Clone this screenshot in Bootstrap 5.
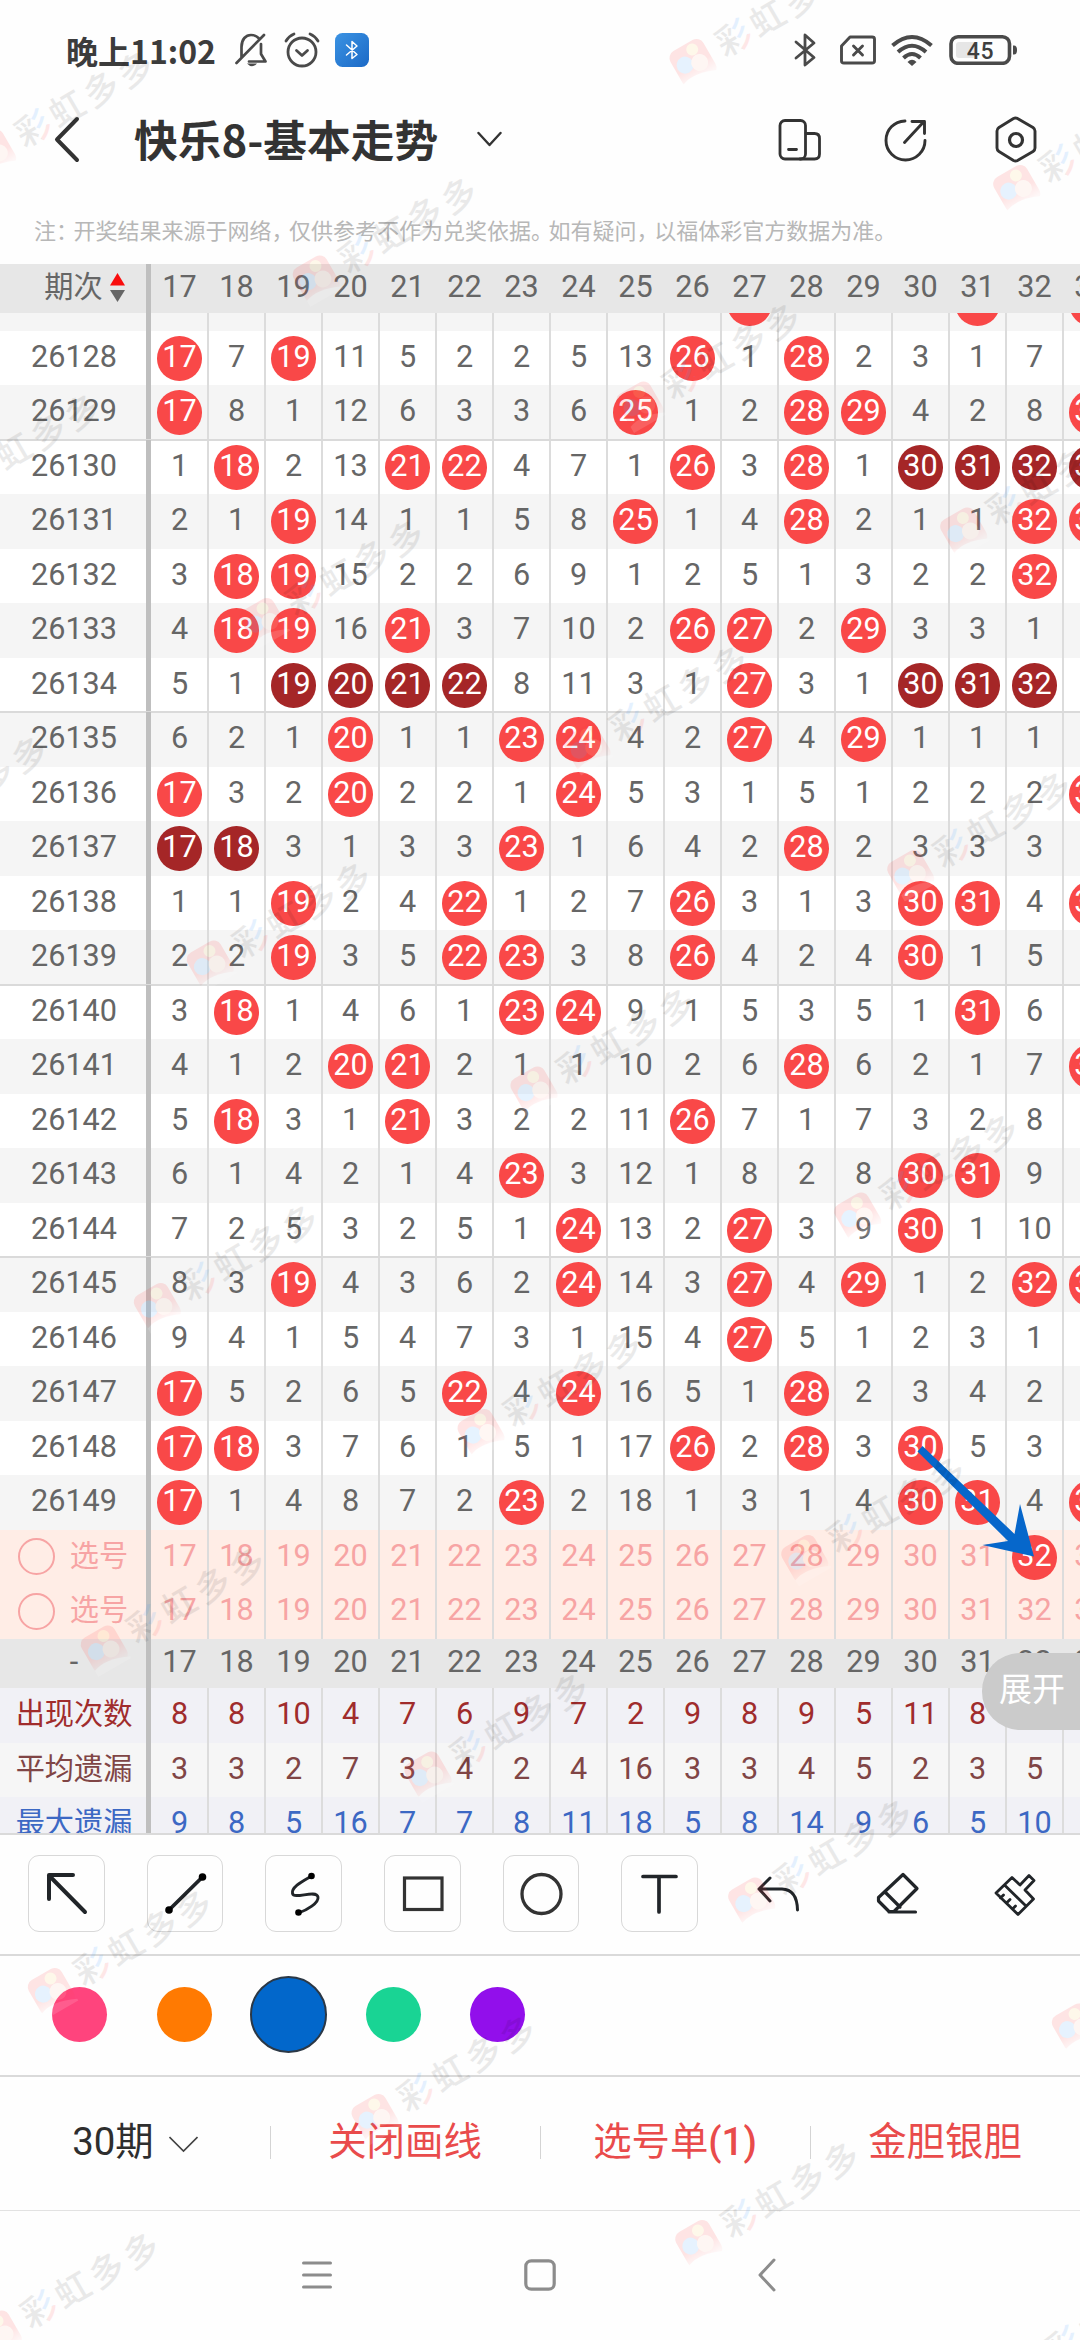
<!DOCTYPE html>
<html lang="zh-CN">
<head>
<meta charset="utf-8">
<meta name="viewport" content="width=device-width, initial-scale=1">
<title>快乐8-基本走势</title>
<link rel="stylesheet" href="https://cdn.jsdelivr.net/npm/bootstrap@5.3.0/dist/css/bootstrap.min.css">
<style>
  body { font-family: Roboto, "Noto Sans CJK SC", sans-serif; background: #fefefe; color: #333; line-height: 1; }
  .screen { width: 1080px; height: 2340px; }
  svg { display: block; flex: none; }
  .ln { fill: none; stroke: currentColor; stroke-linecap: round; stroke-linejoin: round; }

  .statusbar { height: 99px; padding-left: 66px; color: #4a4a4a; }
  .clock { width: 169px; font-size: 32px; font-weight: 600; color: #3c3c3c; font-family: "Noto Sans CJK SC", sans-serif; }
  .titlebar { height: 82px; padding-left: 54px; }
  .title { font-size: 43.7px; font-weight: 600; margin-left: 54px; width: 343px; padding-bottom: 3px; font-family: "Noto Sans CJK SC", sans-serif; }
  .hint { height: 83px; padding: 19px 0 0 34px; font-size: 22px; color: #b7b7b7; }
  .hint i { font-style: normal; letter-spacing: -4.5px; }

  .chart { height: 1569px; }
  .head { height: 49.3px; background: #e7e7e7; flex: none; }
  .line { height: 54.5px; background: #fff; position: relative; flex: none; }
  .line.alt { background: #f5f5f5; }
  .line.split::before { content: ""; position: absolute; left: 0; right: 0; top: -1px; height: 2px; background: #dadada; }
  .line.pick { background: #ffede6; color: #f7a4a4; }
  .line.s1 { background: #f1f1f6; color: #a02c2c; }
  .line.s2 { background: #f6f6f6; color: #804545; }
  .line.s3 { background: #f1f1f6; color: #3c68c4; }
  .peek { height: 17.7px; overflow: hidden; }
  .peek .line { margin-top: -36.8px; }
  .head, .line { font-size: 30.6px; line-height: 36px; color: #666; }
  .tag { width: 152px; flex: none; height: 100%; padding: 0 4px 3px 0; position: relative; }
  .tag::after { content: ""; position: absolute; left: 146px; width: 5px; top: 0; bottom: 0; background: #bfbfbf; }
  .tag .zh { font-size: 29.2px; }
  .tag .period { margin-left: 21px; }
  .cell { width: 57px; flex: none; height: 100%; border-right: 2px solid #dcdcdc; }
  .head .cell { border-color: transparent; }
  .cell span { padding-bottom: 3px; position: relative; }
  .ball { width: 44.6px; height: 44.6px; border-radius: 50%; background: #f94848; color: #fff; margin: 0 -2px; flex: none; }
  .ball.deep { background: #a52627; }
  .ring { width: 37px; height: 37px; border: 2px solid #f7a4a4; border-radius: 50%; margin: 2px 15px 0 -2px; }
  .expand { right: 0; top: 1388.7px; width: 98px; height: 77.3px; border-radius: 38px 0 0 38px; background: #cbcbcb; color: #fff; font-size: 33px; padding: 0 0 3px 17px; }
  .drawn { left: 900px; top: 1160px; }

  .tools { height: 121.3px; border-top: 2px solid #dadada; padding: 0 26px 3px 28px; }
  .tool { width: 76.6px; height: 77px; border: 1px solid transparent; border-radius: 11px; padding: 0; }
  .tool.boxed { border-color: #d8d8d8; }
  .swatches { height: 121px; border-top: 2px solid #dadada; padding: 0 0 3px 52px; gap: 49.5px; }
  .dot { width: 55px; height: 55px; border-radius: 50%; }
  .dot.on { width: 77px; height: 77px; border: 2px solid #2b3846; margin: 0 -11px; }
  .actions { height: 135.7px; border-top: 2px solid #dadada; border-bottom: 1px solid #e2e2e2; font-size: 38.4px; color: #e94b4b; }
  .act { height: 100%; padding-bottom: 2px; }
  .act + .act::before { content: ""; position: absolute; left: 0; top: 49px; width: 1px; height: 33px; background: #d4d4d4; }
  .act b { font-weight: 500; }
  .sysnav { height: 129px; color: #8c8c8c; }
  .marks { left: 0; top: 0; pointer-events: none; z-index: 5; }
  .marks text { font-family: "Noto Sans CJK SC", sans-serif; font-weight: 500; font-size: 35px; }
</style>
<script src="https://cdn.jsdelivr.net/npm/bootstrap@5.3.0/dist/js/bootstrap.bundle.min.js"></script>
</head>
<body>
<main class="screen position-relative overflow-hidden d-flex flex-column">

  <header class="statusbar d-flex align-items-center flex-shrink-0">
    <div class="clock text-nowrap">晚上11:02</div>
    <svg width="32" height="34" viewBox="0 0 32 34"><g class="ln" stroke-width="2.7"><path d="M1.5 30L29 2M6.5 24V14C6.500 6 11 2 16 2C19 2 21.500 3 23.500 5M26 11V21L30.500 28.500H14"/></g><path d="M12 30.500H22Q17 36 12 30.500" fill="currentColor"/></svg>
    <svg width="36" height="36" viewBox="0 0 36 36" style="margin-left:17px"><g class="ln" stroke-width="2.8"><circle cx="18" cy="20" r="14"/><path d="M12.500 18.500L18 23.500L23.500 18.500M2 9Q5 4 10 2M26 2Q31 4 34 9"/></g></svg>
    <svg width="34" height="34" viewBox="0 0 34 34" style="margin-left:15px"><defs><linearGradient id="bt" x2="1" y2="1"><stop stop-color="#3b93e3"/><stop offset="1" stop-color="#1b69c6"/></linearGradient></defs><rect width="34" height="34" rx="7.500" fill="url(#bt)"/><path d="M11.500 12L22 21.500L17 25.500V8.500L22 13L11.500 22" class="ln" stroke-width="1.500" style="stroke:#fff"/></svg>
    <svg width="24" height="36" viewBox="0 0 24 36" style="margin-left:424px"><path class="ln" stroke-width="2.800" d="M3 10L21 25.500L12 33V3L21 11L3 26"/></svg>
    <svg width="36" height="30" viewBox="0 0 36 30" style="margin-left:23px"><path class="ln" stroke-width="2.900" d="M10 2H32Q34.500 2 34.500 4V26Q34.500 28 32 28H4Q1.500 28 1.500 26V11ZM13.500 11L22.500 20M22.500 11L13.500 20"/></svg>
    <svg width="42" height="32" viewBox="0 0 42 32" style="margin-left:15px"><g fill="none" stroke="currentColor" stroke-width="4"><path d="M1.500 11.500Q21-5.500 40.500 11.500"/><path d="M7 18Q21 5.500 35 18"/><path d="M12.500 24Q21 16 29.500 24"/></g><path d="M16.500 28Q21 23.500 25.500 28L21 32Z" fill="currentColor"/></svg>
    <svg width="70" height="30" viewBox="0 0 70 30" style="margin-left:16px"><rect x="2" y="1.800" width="58.500" height="26.500" rx="7" fill="none" stroke="currentColor" stroke-width="3.600"/><rect x="7" y="7" width="20" height="16" rx="3" fill="#e6e6e6"/><path d="M64 10.500H65Q68 10.500 68 15T65 19.500H64Z" fill="currentColor"/><text x="31.500" y="23.500" text-anchor="middle" font-size="23" font-weight="500" letter-spacing=".8" fill="#3f3f3f">45</text></svg>
  </header>

  <nav class="titlebar d-flex align-items-center flex-shrink-0">
    <svg width="26" height="48" viewBox="0 0 26 48"><path class="ln" stroke-width="4" d="M23 3L3 23.500L23 44"/></svg>
    <div class="title text-nowrap">快乐8-基本走势</div>
    <svg width="25" height="20" viewBox="0 0 25 20"><path class="ln" stroke-width="2.400" d="M1.500 3L12.500 15L23.500 3"/></svg>
    <svg width="44" height="44" viewBox="0 0 44 44" style="margin-left:276px"><g class="ln" stroke-width="2.800"><rect x="2" y="2.500" width="25.500" height="38.500" rx="5"/><path d="M28 15.500H36.500Q41.500 15.500 41.500 20.500V36Q41.500 41 36.500 41H22M10.500 31.500H18.500"/></g></svg>
    <svg width="44" height="46" viewBox="0 0 44 46" style="margin-left:62px"><path class="ln" stroke-width="2.900" d="M21 4C10 4.500 2 12.500 2 23.500A19.500 19.500 0 0 0 41 23.500M20.500 25.500L39.500 5M28 4.500H40.500V16.500"/></svg>
    <svg width="42" height="48" viewBox="0 0 42 48" style="margin-left:67px"><path class="ln" stroke-width="2.900" d="M18.500 2.500Q20.500 1.500 22.500 2.500L38 11.500Q40 13 40 15V32Q40 34 38 35.500L22.500 44.500Q20.500 45.500 18.500 44.500L4 35.500Q2 34 2 32V15Q2 13 4 11.500Z"/><circle class="ln" stroke-width="3.200" cx="21" cy="24" r="6.500"/></svg>
  </nav>

  <div class="hint flex-shrink-0 d-flex align-items-center text-nowrap"><div>注<i>：</i>开奖结果来源于网络<i>，</i>仅供参考不作为兑奖依据<i>。</i>如有疑问<i>，</i>以福体彩官方数据为准。</div></div>

  <section class="chart position-relative overflow-hidden flex-shrink-0">
    <div id="grid" class="d-flex flex-column"></div>
    <svg class="drawn position-absolute" width="160" height="160" viewBox="900 1424 160 160"><path fill="#0667cb" d="M922.500 1446L917.500 1451.500L1008 1541L982.500 1545L1034 1556.500L1020 1504L1014.500 1534Z"/></svg>
    <div class="expand position-absolute d-flex align-items-center">展开</div>
  </section>

  <section class="tools d-flex align-items-center justify-content-between flex-shrink-0">
    <button class="btn tool boxed"><svg width="75" height="75" viewBox="0 0 75 75"><path class="ln" stroke-width="4" d="M56 56L20 19.500M44 19H20V43"/></svg></button>
    <button class="btn tool boxed"><svg width="75" height="75" viewBox="0 0 75 75"><path class="ln" stroke-width="3.800" d="M21 54L54.500 21"/><circle cx="21" cy="54" r="3.800"/><circle cx="54.500" cy="21" r="3.800"/></svg></button>
    <button class="btn tool boxed"><svg width="75" height="75" viewBox="0 0 75 75"><path class="ln" stroke-width="2.900" d="M45.500 20C37 25 25 31 26.500 37.500C28 44 50 33 52 41C53 47 41 54 32.500 57"/><circle cx="45.500" cy="20" r="3.300"/><circle cx="32.500" cy="56.500" r="3.300"/></svg></button>
    <button class="btn tool boxed"><svg width="75" height="75" viewBox="0 0 75 75"><rect x="19.500" y="22" width="37.500" height="31.500" fill="none" stroke="#333" stroke-width="3.200"/></svg></button>
    <button class="btn tool boxed"><svg width="75" height="75" viewBox="0 0 75 75"><circle cx="37.500" cy="38" r="19.500" fill="none" stroke="#333" stroke-width="3.300"/></svg></button>
    <button class="btn tool boxed"><svg width="75" height="75" viewBox="0 0 75 75"><path class="ln" stroke-width="3.700" d="M21 20.500H54M37 20.500V56"/></svg></button>
    <button class="btn tool"><svg width="75" height="75" viewBox="0 0 75 75"><path class="ln" stroke-width="3" d="M29 22L18 33L29 45M18 33H41Q56 33.500 56.500 54"/></svg></button>
    <button class="btn tool"><svg width="75" height="75" viewBox="0 0 75 75"><path class="ln" stroke-width="3.200" d="M43 18.500L57 32.500L34 55.500H29L18.500 45V41.500ZM25 36L40 51M29 56H55.500"/></svg></button>
    <button class="btn tool"><svg width="75" height="75" viewBox="0 0 75 75"><path class="ln" stroke-width="2.800" d="M18 37L34 21.500L42 29L51 19.500L56 24.500L47 34L55.500 43L40 58.500ZM27 29.500L47.500 49.500M22.500 42L25.500 39M28.500 47L32 43.500M34.500 53L37.500 50"/></svg></button>
  </section>

  <section class="swatches d-flex align-items-center flex-shrink-0">
    <div class="dot" style="background:#ff447d"></div>
    <div class="dot" style="background:#ff7a02"></div>
    <div class="dot on" style="background:#0267cb"></div>
    <div class="dot" style="background:#19d494"></div>
    <div class="dot" style="background:#920feb"></div>
  </section>

  <footer class="actions row g-0 flex-shrink-0 text-center">
    <div class="act col-3 d-flex align-items-center justify-content-center text-dark"><span style="color:#2e2e2e">30期</span><svg class="mt-1" width="29" height="18" viewBox="0 0 29 18" style="margin-left:15px"><path fill="none" stroke="#444" stroke-width="1.600" d="M.5 1L14.500 15L28.500 1"/></svg></div>
    <div class="act col-3 d-flex align-items-center justify-content-center position-relative">关闭画线</div>
    <div class="act col-3 d-flex align-items-center justify-content-center position-relative">选号单<b>(1)</b></div>
    <div class="act col-3 d-flex align-items-center justify-content-center position-relative">金胆银胆</div>
  </footer>

  <nav class="sysnav d-flex align-items-center flex-shrink-0">
    <svg width="30" height="30" viewBox="0 0 30 30" style="margin-left:302px"><path class="ln" stroke-width="3" d="M1.500 3H28.500M1.500 15H28.500M1.500 27H28.500"/></svg>
    <svg width="32" height="32" viewBox="0 0 32 32" style="margin-left:192px"><rect x="1.800" y="1.800" width="28.400" height="28.400" rx="5.500" fill="none" stroke="currentColor" stroke-width="3.200"/></svg>
    <svg width="18" height="34" viewBox="0 0 18 34" style="margin-left:202px"><path class="ln" stroke-width="3" d="M16 2L2 17L16 32"/></svg>
  </nav>

  <svg class="marks position-absolute" width="1080" height="2340" viewBox="0 0 1080 2340">
    <defs>
      <linearGradient id="fade" x2="0" y2="1"><stop offset=".55" stop-color="#ff3b3b"/><stop offset=".9" stop-color="#ff3b3b" stop-opacity=".25"/></linearGradient>
      <linearGradient id="stroke3" gradientUnits="userSpaceOnUse" x1="0" y1="-16" x2="0" y2="18"><stop offset=".57" stop-color="#3f9bff"/><stop offset=".57" stop-color="#ff5555"/></linearGradient>
      <clipPath id="left"><rect x="20" y="-25" width="30" height="50"/><rect x="67" y="-25" width="160" height="50"/></clipPath>
      <clipPath id="right"><rect x="50" y="-25" width="17" height="50"/></clipPath>
    </defs>
    <g id="marks"></g>
  </svg>
</main>

<script>
  // Each row: period, then columns 17-33; "o" is a drawn number, "d" a drawn number in a run, "-" an empty cell.
  const draws = [
    '26128 o 7 o 11 5 2 2 5 13 o 1 o 2 3 1 7 -',
    '26129 o 8 1 12 6 3 3 6 o 1 2 o o 4 2 8 o',
    '26130 1 o 2 13 o o 4 7 1 o 3 o 1 d d d d',
    '26131 2 1 o 14 1 1 5 8 o 1 4 o 2 1 1 o o',
    '26132 3 o o 15 2 2 6 9 1 2 5 1 3 2 2 o -',
    '26133 4 o o 16 o 3 7 10 2 o o 2 o 3 3 1 -',
    '26134 5 1 d d d d 8 11 3 1 o 3 1 d d d -',
    '26135 6 2 1 o 1 1 o o 4 2 o 4 o 1 1 1 -',
    '26136 o 3 2 o 2 2 1 o 5 3 1 5 1 2 2 2 o',
    '26137 d d 3 1 3 3 o 1 6 4 2 o 2 3 3 3 -',
    '26138 1 1 o 2 4 o 1 2 7 o 3 1 3 o o 4 o',
    '26139 2 2 o 3 5 o o 3 8 o 4 2 4 o 1 5 -',
    '26140 3 o 1 4 6 1 o o 9 1 5 3 5 1 o 6 -',
    '26141 4 1 2 o o 2 1 1 10 2 6 o 6 2 1 7 o',
    '26142 5 o 3 1 o 3 2 2 11 o 7 1 7 3 2 8 -',
    '26143 6 1 4 2 1 4 o 3 12 1 8 2 8 o o 9 -',
    '26144 7 2 5 3 2 5 1 o 13 2 o 3 9 o 1 10 -',
    '26145 8 3 o 4 3 6 2 o 14 3 o 4 o 1 2 o o',
    '26146 9 4 1 5 4 7 3 1 15 4 o 5 1 2 3 1 -',
    '26147 o 5 2 6 5 o 4 o 16 5 1 o 2 3 4 2 -',
    '26148 o o 3 7 6 1 5 1 17 o 2 o 3 o 5 3 -',
    '26149 o 1 4 8 7 2 o 2 18 1 3 1 4 o o 4 o'
  ].map(s => s.split(' '));
  const all = Array.from({ length: 17 }, (_, i) => String(17 + i));
  const mid = 'd-flex align-items-center justify-content-center';

  // "e" is a ball whose number is scrolled out of view
  const cell = (v, i) => {
    const n = 17 + i;
    const inner = v === 'o' || v === 'd'
      ? `<div class="ball ${v === 'd' ? 'deep' : ''} position-relative ${mid}"><span>${n}</span></div>`
      : v === 'e' ? '<div class="ball"></div>'
      : v === '-' ? '' : `<span>${v}</span>`;
    return `<div class="cell ${mid}">${inner}</div>`;
  };
  const line = (cls, tag, vals) =>
    `<div class="${cls} d-flex"><div class="tag ${mid}">${tag}</div>${vals.map(cell).join('')}</div>`;

  let html = line('head', '<span class="zh period">期次</span><svg width="15" height="30" viewBox="0 0 15 30" style="margin-left:7px"><path d="M7.500 1L15 13.500H0Z" fill="#f90d0d"/><path d="M0 18H15L7.500 30Z" fill="#666"/></svg>', all);
  html += '<div class="peek">' + line('line alt', '', '- - - - - - - - - - e - - - e - e'.split(' ')) + '</div>';
  draws.forEach((r, i) => {
    html += line('line' + (i % 2 ? ' alt' : '') + (i % 5 === 2 ? ' split' : ''), r[0], r.slice(1));
  });
  const pick = '<div class="ring"></div><span class="zh">选号</span>';
  html += line('line pick', pick, all.map(n => n === '32' ? 'o' : n));
  html += line('line pick', pick, all);
  html += line('head', '-', all);
  html += line('line s1', '<span class="zh">出现次数</span>', '8 8 10 4 7 6 9 7 2 9 8 9 5 11 8 - -'.split(' '));
  html += line('line s2', '<span class="zh">平均遗漏</span>', '3 3 2 7 3 4 2 4 16 3 3 4 5 2 3 5 -'.split(' '));
  html += line('line s3', '<span class="zh">最大遗漏</span>', '9 8 5 16 7 7 8 11 18 5 8 14 9 6 5 10 -'.split(' '));
  document.getElementById('grid').innerHTML = html;

  // Tilted brand marks on a skewed lattice
  let marks = '';
  for (let m = -1; m <= 8; m++) for (let n = -4; n <= 3; n++) {
    const x = 691.5 + 323.7 * n - 53 * m, y = 62 + 126 * n + 342.5 * m;
    if (x < -190 || x > 1110 || y < -30 || y > 2440) continue;
    marks += `<g transform="translate(${x + 1} ${y}) rotate(-30)">
      <g opacity=".13"><rect x="-19" y="-19" width="38" height="40" rx="8" fill="url(#fade)"/>
      <circle cx="6" cy="-11" r="6" fill="#ffd36b"/><circle cx="-8" cy="-1" r="8.500" fill="#4aa8ff"/><circle cx="6" cy="4" r="8.500" fill="#ffc9b0"/><path d="M-19 15Q-4 9 19 20V22H-19Z" fill="#fff"/></g>
      <g opacity=".08"><text x="30" y="12.500" letter-spacing="4.300" clip-path="url(#left)">彩虹多多</text></g>
      <g opacity=".13"><text x="30" y="12.500" fill="url(#stroke3)" clip-path="url(#right)">彩</text></g></g>`;
  }
  document.getElementById('marks').innerHTML = marks;
</script>
</body>
</html>
